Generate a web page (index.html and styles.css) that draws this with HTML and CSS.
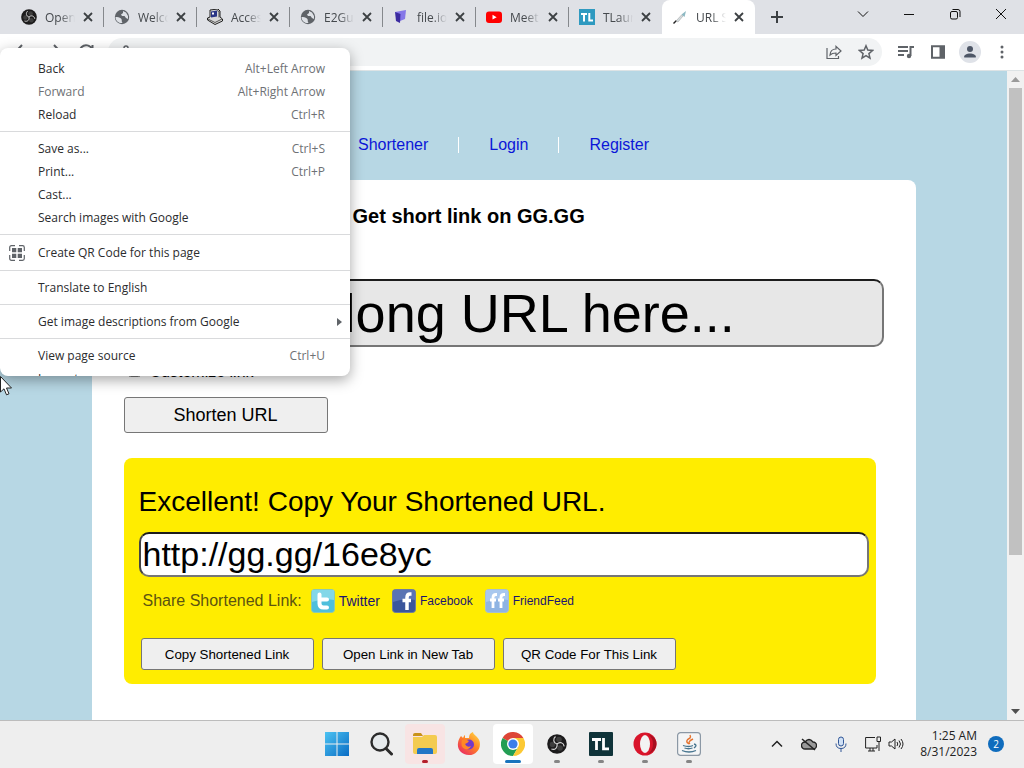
FILE: index.html
```html
<!DOCTYPE html>
<html lang="en">
<head>
    <meta charset="UTF-8">
    <title>URL Shortener</title>
    <link rel="stylesheet" href="styles.css">
</head>
<body>
    <!-- shared symbols -->
    <svg class="defs" aria-hidden="true">
        <symbol id="x" viewBox="0 0 10 10"><path d="M1 1l8 8M9 1l-8 8" stroke="#3c4043" stroke-width="1.8"/></symbol>
        <symbol id="globe" viewBox="0 0 16 16"><circle cx="8" cy="8" r="7.200" fill="#5f6368"/><path d="M1.500 8c2 0 4 0 5.500 1.500S7 12 8.500 14C5 14.500 1.500 12 1.500 8zM9 2l3 1.500 2 3.500v3l-2-1-1.500-2H8L7 5.500 9 4z" fill="#dee1e6"/></symbol>
        <symbol id="obs" viewBox="0 0 20 20"><circle cx="10" cy="10" r="9.800" fill="#1c1b1c"/><g fill="#3d3d3d"><circle cx="12" cy="5.500" r="2.800"/><circle cx="13" cy="14" r="2.800"/><circle cx="5.500" cy="10.500" r="2.800"/></g><g fill="none" stroke="#d5d5d5" stroke-width="1.200"><path d="M10 10C6.500 9 5.500 5 8.500 2.500"/><path d="M10 10c2.600-2.600 6.600-1.500 7.200 2.300"/><path d="M10 10c1 3.500-2 6.400-5.600 5"/></g></symbol>
    </svg>

    <div class="tabs">
        <div class="tab"><svg><use href="#obs"/></svg><span>Open</span><button aria-label="Close"><svg><use href="#x"/></svg></button></div>
        <div class="tab"><svg><use href="#globe"/></svg><span>Welco</span><button aria-label="Close"><svg><use href="#x"/></svg></button></div>
        <div class="tab"><svg viewBox="0 0 16 16"><path d="M3 1l8-1 2 2v6l2.500 2v2L8 15.500.500 11V9L3 8z" fill="#d8d8d8" stroke="#222"/><path d="M4 2.500l6-1v6l-6 1z" fill="#2a3585"/><path d="M5 3.500h2v2H5z" fill="#fff"/><path d="M1 10l7 3.500 7-3.500M10 1.500l2 1v6" fill="none" stroke="#333" stroke-width=".8"/></svg><span>Acces</span><button aria-label="Close"><svg><use href="#x"/></svg></button></div>
        <div class="tab"><svg><use href="#globe"/></svg><span>E2Gu</span><button aria-label="Close"><svg><use href="#x"/></svg></button></div>
        <div class="tab"><svg viewBox="0 0 16 16"><path d="M2 3l11-2-1 9-5 2z" fill="#8577e8"/><path d="M2 3l5.500 2L7 14l-4-2z" fill="#3b2ba0"/></svg><span>file.io</span><button aria-label="Close"><svg><use href="#x"/></svg></button></div>
        <div class="tab"><svg viewBox="0 0 16 16"><rect y="2.500" width="16" height="11.500" rx="3" fill="#f00"/><path d="M6.500 5.800l4.200 2.400-4.200 2.400z" fill="#fff"/></svg><span>Meet</span><button aria-label="Close"><svg><use href="#x"/></svg></button></div>
        <div class="tab"><svg viewBox="0 0 16 16"><rect width="16" height="16" fill="#2f9ac0"/><path d="M2 5h6M5 5v7.500M10.300 4v7.500H14" fill="none" stroke="#fff" stroke-width="2"/></svg><span>TLaun</span><button aria-label="Close"><svg><use href="#x"/></svg></button></div>
        <div class="tab active"><svg viewBox="0 0 16 16"><path d="M1.500 14.500l3-3" stroke="#222" stroke-width="1.500"/><path d="M4 12l5.500-6 1.500 1-5 6z" fill="#d5dde0" stroke="#999" stroke-width=".5"/><path d="M9.500 5.500L14 2l-1.500 6z" fill="#8db9c3"/></svg><span>URL S</span><button aria-label="Close"><svg><use href="#x"/></svg></button></div>
        <button class="new-tab" aria-label="New tab"><svg width="12" height="12" viewBox="0 0 12 12"><path d="M6 0v12M0 6h12" stroke="#3c4043" stroke-width="2"/></svg></button>
        <div class="window-controls">
            <button aria-label="Search tabs"><svg viewBox="0 0 12 12"><path d="M1 3.500l5 5 5-5"/></svg></button>
            <button aria-label="Minimize"><svg viewBox="0 0 12 12"><path d="M1 6.500h10"/></svg></button>
            <button aria-label="Restore"><svg viewBox="0 0 12 12"><rect x="1.500" y="3.500" width="7" height="7.500" rx="1.500"/><path d="M3.500 1.500H9q2 0 2 2V9"/></svg></button>
            <button aria-label="Close window"><svg viewBox="0 0 12 12"><path d="M1 1l10 10M11 1L1 11"/></svg></button>
        </div>
    </div>

    <div class="toolbar">
        <button aria-label="Back"><svg viewBox="0 0 16 16"><path d="M15 8H2M8 1L1.500 8 8 15"/></svg></button>
        <button aria-label="Forward"><svg viewBox="0 0 16 16"><path d="M1 8h13M8 1l6.500 7L8 15"/></svg></button>
        <button aria-label="Reload"><svg viewBox="0 0 16 16"><path d="M14 5A6.500 6.500 0 1 0 14.500 9M14.500 1v5h-5"/></svg></button>
        <div class="omnibox">
            <svg class="lock" viewBox="0 0 12 16"><path d="M4 6V4a2 2 0 0 1 4 0v2" stroke-width="1.500"/><path d="M2 6h8v7H2z" fill="#5f6368" stroke="none"/></svg>
            <button aria-label="Share"><svg viewBox="0 0 16 16"><path d="M1 4v10.500h11.500V12M4 11c.3-4 2.500-6 6-6V2.300L15 7l-5 4.500V9C7.500 9 5.500 9.500 4 11z" stroke-width="1.200"/></svg></button>
            <button aria-label="Bookmark"><svg viewBox="0 0 16 16"><path d="M8 1.800l1.800 4.300 4.700.4-3.600 3.100 1.100 4.600L8 11.700l-4 2.500 1.100-4.600-3.600-3.100 4.700-.4z" stroke-width="1.500"/></svg></button>
        </div>
        <div class="actions">
            <button aria-label="Media"><svg viewBox="0 0 16 16"><path d="M0 3h10M0 7h10M0 11h6M12.500 12V3H16"/><circle cx="11" cy="12" r="2.200" fill="#5f6368" stroke="none"/></svg></button>
            <button aria-label="Side panel"><svg viewBox="0 0 16 16"><path d="M2 2.200h12v11.600H2z"/><path d="M9.500 2h5v12h-5z" fill="#5f6368" stroke="none"/></svg></button>
            <button class="avatar" aria-label="Profile"><svg viewBox="0 0 16 16"><g fill="#4d5666" stroke="none"><circle cx="8" cy="5" r="3"/><path d="M2 13.500c0-3 3-4 6-4s6 1 6 4z"/></g></svg></button>
            <button aria-label="Menu"><svg viewBox="0 0 16 16"><g fill="#5f6368" stroke="none"><circle cx="8" cy="3" r="1.500"/><circle cx="8" cy="8" r="1.500"/><circle cx="8" cy="13" r="1.500"/></g></svg></button>
        </div>
    </div>

    <div class="view">
        <div class="page">
            <div class="nav">
                <a href="#">Shortener</a><i></i><a href="#">Login</a><i></i><a href="#">Register</a>
            </div>
            <div class="container">
                <h1>Get short link on GG.GG</h1>
                <input type="text" class="long-url" aria-label="Long URL" value="Put your long URL here...">
                <label class="customize"><input type="checkbox"> Customize link</label>
                <button class="shorten">Shorten URL</button>
                <div class="result">
                    <h2>Excellent! Copy Your Shortened URL.</h2>
                    <input type="text" class="short-url" aria-label="Shortened URL" value="http://gg.gg/16e8yc">
                    <div class="share">
                        <span>Share Shortened Link:</span>
                        <a href="#" class="twitter"><svg viewBox="0 0 24 24"><rect x=".5" y=".5" width="23" height="23" rx="3" fill="#4fbfdc" stroke="#8fc9b0"/><path d="M1 1h22v10Q12 9 1 13z" fill="#83d7e8"/><path d="M8.500 5.500v9q0 4 4 4H16M8.500 10.500H16" fill="none" stroke="#fff" stroke-width="4" stroke-linecap="round"/></svg>Twitter</a>
                        <a href="#"><svg viewBox="0 0 24 24"><rect x=".5" y=".5" width="23" height="23" rx="3" fill="#3b569c" stroke="#6f7d9c"/><path d="M1 1h22v10Q12 9 1 13z" fill="#5a74b4"/><path d="M19.500 5H18q-3 0-3 3.500V21M10.500 11.500h8.500" fill="none" stroke="#fff" stroke-width="3.500"/></svg>Facebook</a>
                        <a href="#"><svg viewBox="0 0 24 24"><rect x=".5" y=".5" width="23" height="23" rx="3" fill="#8fb4e3" stroke="#a9c0cf"/><path d="M1 1h22v10Q12 9 1 13z" fill="#a9c8ee"/><path d="M12 5.500h-1Q8 5.500 8 8.500V19M5 11h6M20 5.500h-1q-3 0-3 3V19M13 11h6" fill="none" stroke="#fff" stroke-width="2.800"/></svg>FriendFeed</a>
                    </div>
                    <div class="buttons">
                        <button>Copy Shortened Link</button>
                        <button>Open Link in New Tab</button>
                        <button>QR Code For This Link</button>
                    </div>
                </div>
            </div>
        </div>
        <div class="scrollbar">
            <svg viewBox="0 0 9 5"><path d="M0 5l4.500-5L9 5z" fill="#9a9a9a"/></svg>
            <div class="track"><div class="thumb"></div></div>
            <svg viewBox="0 0 9 5"><path d="M0 0h9L4.500 5z" fill="#505050"/></svg>
        </div>
    </div>

    <div class="taskbar">
        <div class="apps">
            <button aria-label="Start"><svg viewBox="0 0 24 24"><defs><linearGradient id="win" x2="1" y2="1"><stop stop-color="#4cc3f2"/><stop offset="1" stop-color="#0a6cc4"/></linearGradient></defs><path d="M0 0h11.500v11.500H0zM12.500 0H24v11.500H12.500zM0 12.500h11.500V24H0zM12.500 12.500H24V24H12.500z" fill="url(#win)"/></svg></button>
            <button aria-label="Search"><svg viewBox="0 0 24 24"><circle cx="11" cy="10" r="8.500" fill="#e6eaec" stroke="#2b2b2b" stroke-width="2.400"/><path d="M17 16.500l5.500 5.500" stroke="#2b2b2b" stroke-width="3" stroke-linecap="round"/></svg></button>
            <button class="running alert" aria-label="File Explorer"><svg viewBox="0 0 24 24"><path d="M0 3q0-2 2-2h6l2 3H0z" fill="#c9921b"/><path d="M0 5h9l2-2h11q2 0 2 2v15q0 2-2 2H2q-2 0-2-2z" fill="#f4cb50"/><path d="M4 22v-4q0-2 2-2h12q2 0 2 2v4z" fill="#2376c6"/></svg></button>
            <button aria-label="Firefox"><svg viewBox="0 0 24 24"><defs><linearGradient id="fox" x1="1" x2=".2" y2="1"><stop stop-color="#ffe14a"/><stop offset=".5" stop-color="#ff8424"/><stop offset="1" stop-color="#ea2a64"/></linearGradient></defs><path d="M4 4l2 2c1-2 1.500-3 2-3v3l4 0c0-3 1-5 4-6 0 3 5 4 6.500 9 2 7-3 14-10.500 14C4 23 0 17 1 11c.3-3 1.500-5 3-7z" fill="url(#fox)"/><circle cx="12" cy="12.500" r="5" fill="#7339c9"/><path d="M5 8q4-1 7 1-1 2-4 3 2 4 6 2-2 4-6 3-5-2-3-9z" fill="#ff8826"/></svg></button>
            <button class="running current" aria-label="Chrome"><svg viewBox="0 0 24 24"><path d="M12 12L1.600 6A12 12 0 0 1 22.400 6z" fill="#dd4537"/><path d="M12 12L1.600 6A12 12 0 0 0 12 24l5.200-9z" fill="#239e54"/><path d="M12 6h10.400A12 12 0 0 1 12 24l5.200-9z" fill="#fcc934"/><circle cx="12" cy="12" r="6" fill="#fff"/><circle cx="12" cy="12" r="4.600" fill="#3b7de9"/></svg></button>
            <button class="running" aria-label="OBS"><svg><use href="#obs"/></svg></button>
            <button class="running" aria-label="TLauncher"><svg viewBox="0 0 24 24"><rect width="24" height="24" rx="1" fill="#10343a"/><path d="M3 7.500h9M7.500 7.500V18M14.500 6v10.800H20" fill="none" stroke="#fff" stroke-width="2.800"/></svg></button>
            <button class="running" aria-label="Opera"><svg viewBox="0 0 24 24"><ellipse cx="12" cy="12" rx="11.500" ry="11.500" fill="#d9152b"/><path d="M15 2Q23.500 5 23.500 12T15 22q5-4 5-10T15 2z" fill="#a80f20"/><ellipse cx="12" cy="12" rx="5" ry="9" fill="#f3f3f3"/></svg></button>
            <button class="running" aria-label="Java"><svg viewBox="0 0 24 24"><rect x=".6" y=".6" width="22.800" height="22.800" rx="3" fill="#f4f5f6" stroke="#8b98a5" stroke-width="1.200"/><path d="M12 12q-5-3 1-6 1-1 0-3M13 12q-3-2 3-5" fill="none" stroke="#e5732f" stroke-width="1.400"/><path d="M6 13.500q6 2 10 0M7.500 16q4 1.500 8 0M5 18.500q7 3 14 0M17 12q4 1 0 4" fill="none" stroke="#47758f" stroke-width="1.300"/></svg></button>
        </div>
        <div class="tray">
            <svg viewBox="0 0 16 16"><path d="M3 10.500l5-5 5 5" stroke-width="1.500"/></svg>
            <svg viewBox="0 0 16 16"><path d="M4 13a3.500 3.500 0 0 1 0-7q4-5 8 0a3.500 3.500 0 0 1 0 7z" fill="#999" stroke-width="1.300"/><path d="M1 3l13 11" stroke-width="1.500"/></svg>
            <svg viewBox="0 0 16 16"><g stroke="#2f5596"><rect x="5.500" y="1" width="5" height="9" rx="2.500" fill="#cfe0f5"/><path d="M3 7.500q0 5 5 5t5-5M8 12.500V16"/></g></svg>
            <svg viewBox="0 0 16 16"><path d="M10 1.500H.600v10.500H12V9M5 12v3M8 12v3M3 15h7M12 1h3.500v4.500H12zM14 5.500V15"/></svg>
            <svg class="sound" viewBox="0 0 16 16"><path d="M1 6h2.500L7 3v10L3.500 10H1zM9 6q1.500 2 0 4M11 4.500q3 3.500 0 7M13 3q4 5 0 10"/></svg>
            <div class="clock">1:25 AM<br>8/31/2023</div>
            <span class="badge">2</span>
        </div>
    </div>

    <div class="menu" role="menu">
        <button>Back<kbd>Alt+Left Arrow</kbd></button>
        <button disabled>Forward<kbd>Alt+Right Arrow</kbd></button>
        <button>Reload<kbd>Ctrl+R</kbd></button>
        <hr>
        <button>Save as...<kbd>Ctrl+S</kbd></button>
        <button>Print...<kbd>Ctrl+P</kbd></button>
        <button>Cast...</button>
        <button>Search images with Google</button>
        <hr>
        <button class="with-icon"><svg width="16" height="16" viewBox="0 0 16 16"><path d="M6 .700H2.500Q.700.700.700 2.500V6M10 .700h3.500q1.800 0 1.800 1.800V6M6 15.300H2.500q-1.800 0-1.800-1.800V10M10 15.300h3.500q1.800 0 1.800-1.800V10" fill="none" stroke="#5f6368" stroke-width="1.200"/><path d="M3 3h4.300v4.300H3zM8.700 3H13v4.300H8.700zM3 8.700h4.300V13H3zM8.700 8.700H13V13H8.700z" fill="#5f6368"/></svg>Create QR Code for this page</button>
        <hr>
        <button>Translate to English</button>
        <hr>
        <button class="submenu">Get image descriptions from Google<svg width="5" height="8" viewBox="0 0 5 8"><path d="M0 0l5 4-5 4z" fill="#5f6368"/></svg></button>
        <hr>
        <button>View page source<kbd>Ctrl+U</kbd></button>
        <button>Inspect</button>
    </div>
    <svg class="cursor" width="12" height="20" viewBox="0 0 12 20"><path d="M.500.500v15.500l3.500-3.200 2.500 6 2.500-1-2.500-5.800h5z" fill="#fff" stroke="#222"/></svg>
</body>
</html>
```
FILE: styles.css
```css
* {
    box-sizing: border-box;
}
body {
    margin: 0;
    height: 100vh;
    display: flex;
    flex-direction: column;
    overflow: hidden;
    font-family: "Liberation Sans", Arial, sans-serif;
}
button {
    font-family: inherit;
    padding: 0;
}
.defs {
    position: absolute;
    width: 0;
    height: 0;
}

/* browser tabs */
.tabs {
    display: flex;
    height: 34px;
    padding-left: 11px;
    background: #dfe1e6;
    font: 12px "Open Sans", sans-serif;
    color: #45494d;
}
.tabs button, .toolbar button, .taskbar button, .menu button {
    border: none;
    background: none;
}
.tab {
    display: flex;
    align-items: center;
    width: 93px;
    padding-left: 10px;
}
.tab > svg {
    flex: none;
    width: 16px;
    height: 16px;
}
.tab span {
    width: 30px;
    margin: 0 8px;
    overflow: hidden;
    white-space: nowrap;
    -webkit-mask-image: linear-gradient(to right, #000 50%, transparent);
    mask-image: linear-gradient(to right, #000 50%, transparent);
}
.tab button, .tab button svg {
    display: block;
    width: 10px;
    height: 10px;
}
.tab::after {
    content: "";
    width: 1px;
    height: 20px;
    margin-left: 10px;
    background: #85888c;
}
.tab.active {
    background: #fff;
    border-radius: 8px 8px 0 0;
}
.tab.active::after, .tab:nth-child(7)::after {
    background: none;
}
.new-tab {
    margin-left: 16px;
}
.new-tab svg {
    display: block;
}
.window-controls {
    display: flex;
    margin-left: auto;
}
.window-controls button {
    width: 46px;
    height: 29px;
}
.window-controls svg {
    width: 12px;
    height: 12px;
    fill: none;
    stroke: #111;
}

/* address bar */
.toolbar {
    display: flex;
    align-items: center;
    height: 37px;
    padding: 0 6px;
    background: #fff;
    border-bottom: 1px solid #dde3e5;
}
.toolbar svg {
    display: block;
    width: 16px;
    height: 16px;
    margin: auto;
    fill: none;
    stroke: #5f6368;
    stroke-width: 2;
}
.toolbar button {
    width: 32px;
    height: 28px;
}
.omnibox {
    flex: 1;
    display: flex;
    align-items: center;
    height: 28px;
    margin-left: 6px;
    border-radius: 14px;
    background: #f1f3f4;
}
.omnibox .lock {
    width: 12px;
    margin: 0 auto 0 12px;
}
.actions {
    display: flex;
    margin-left: 8px;
}
.toolbar .avatar svg {
    width: 22px;
    height: 22px;
    padding: 3px;
    border-radius: 50%;
    background: #dfe2e8;
}

/* web page */
.view {
    flex: 1;
    min-height: 0;
    display: flex;
}
.page {
    flex: 1;
    overflow: hidden;
    padding: 0 90px;
    background: #b7d7e4;
}
.nav {
    display: flex;
    align-items: center;
    height: 109px;
    padding: 38px 0 0 268px;
    gap: 30px;
    font-size: 16px;
}
.nav a {
    color: #0b16d8;
    text-decoration: none;
}
.nav i {
    width: 1px;
    height: 16px;
    background: #fff;
}
.container {
    max-width: 824px;
    height: 700px;
    margin: 0 auto;
    padding: 24px 32px;
    border-radius: 8px;
    background: #fff;
}
h1 {
    margin: 0 0 51px 229px;
    font-size: 20px;
    line-height: 24px;
}
.long-url, .short-url {
    display: block;
    width: 100%;
    padding: 1px 2px;
    border: 2px solid #767676;
    border-top-color: #1c1c1c;
    border-left-color: #444;
    border-radius: 10px;
    font-family: inherit;
    color: #000;
}
.long-url {
    background: #e7e7e7;
    font-size: 54px;
}
.customize {
    display: flex;
    align-items: baseline;
    height: 50px;
    gap: 9px;
    padding: 16px 0 0 4px;
    font-size: 16px;
}
.customize input {
    margin: 0;
}
.shorten, .buttons button {
    border: 1px solid #767676;
    border-radius: 3px;
    background: #efefef;
    color: #000;
}
.shorten {
    display: block;
    width: 204px;
    height: 36px;
    font-size: 18px;
}
.result {
    margin: 25px 8px 0 0;
    padding: 28px 7px 14px 15px;
    border-radius: 8px;
    background: #ffed00;
}
h2 {
    margin: 0 0 14px;
    font-size: 28px;
    font-weight: normal;
    line-height: 32px;
}
.short-url {
    background: #fff;
    font-size: 34px;
}
.share {
    display: flex;
    align-items: center;
    margin: 12px 0 25px 4px;
    gap: 12px;
    font-size: 16px;
    color: #5c5410;
}
.share span {
    margin-right: -3px;
}
.share a {
    display: flex;
    align-items: center;
    gap: 4px;
    font-size: 12px;
    color: #1b1470;
    text-decoration: none;
}
.share .twitter {
    font-size: 14px;
}
.share svg {
    width: 24px;
    height: 24px;
}
.buttons {
    display: flex;
    gap: 8px;
    margin-left: 2px;
}
.buttons button {
    width: 173px;
    height: 32px;
}
.scrollbar {
    display: flex;
    flex-direction: column;
    align-items: center;
    width: 17px;
    padding: 6px 0;
    background: #f1f1f1;
}
.scrollbar svg {
    width: 9px;
    height: 5px;
}
.track {
    flex: 1;
    padding: 6px 0;
}
.thumb {
    width: 13px;
    height: 76%;
    background: #c1c1c1;
}

/* taskbar */
.taskbar {
    display: grid;
    grid-template-columns: 1fr auto 1fr;
    height: 48px;
    padding-bottom: 2px;
    background: #eeeeee;
    border-top: 1px solid #bcbcbc;
}
.apps {
    grid-column: 2;
    display: flex;
    align-items: center;
    gap: 4px;
    padding-left: 2px;
}
.apps button {
    position: relative;
    width: 40px;
    height: 40px;
    border-radius: 4px;
}
.apps svg {
    display: block;
    width: 24px;
    height: 24px;
    margin: auto;
}
.apps svg:has(use) {
    width: 20px;
}
.apps .running::after {
    content: "";
    position: absolute;
    left: 17px;
    bottom: 1px;
    width: 6px;
    height: 3px;
    border-radius: 2px;
    background: #858585;
}
.apps .alert {
    background: #f8e4e4;
}
.apps .alert::after {
    background: #b3202c;
}
.apps .current {
    background: #fff;
}
.apps .current::after {
    left: 12px;
    width: 16px;
    background: #1874bd;
}
.tray {
    display: flex;
    align-items: center;
    justify-content: flex-end;
    gap: 16px;
    padding-right: 20px;
}
.tray svg {
    width: 16px;
    height: 16px;
    fill: none;
    stroke: #222;
}
.tray .sound {
    margin-left: -9px;
}
.clock {
    font: 12px/16px "Open Sans", sans-serif;
    text-align: right;
    color: #222;
}
.badge {
    width: 16px;
    margin-left: -5px;
    border-radius: 50%;
    background: #0f6cbd;
    color: #fff;
    font: 10px/16px "Open Sans", sans-serif;
    text-align: center;
}

/* context menu */
.menu {
    position: absolute;
    top: 48px;
    left: 0;
    width: 350px;
    height: 328px;
    padding-top: 9px;
    overflow: hidden;
    border-radius: 8px;
    background: #fff;
    box-shadow: 0 4px 14px rgba(0,0,0,0.35);
}
.menu button {
    display: flex;
    align-items: center;
    width: 100%;
    height: 23px;
    padding: 0 25px 0 38px;
    font: 12px "Open Sans", sans-serif;
    color: #2b2c2e;
}
.menu button:disabled, .menu kbd {
    color: #6e7175;
}
.menu kbd {
    margin-left: auto;
    font: inherit;
}
.menu hr {
    height: 1px;
    margin: 5px 0;
    border: none;
    background: #d9dadc;
}
.menu .with-icon {
    height: 25px;
    padding-left: 9px;
    gap: 13px;
}
.menu .submenu {
    padding-right: 8px;
}
.submenu svg {
    margin-left: auto;
}
.cursor {
    position: absolute;
    top: 376px;
    left: 0;
}
```
